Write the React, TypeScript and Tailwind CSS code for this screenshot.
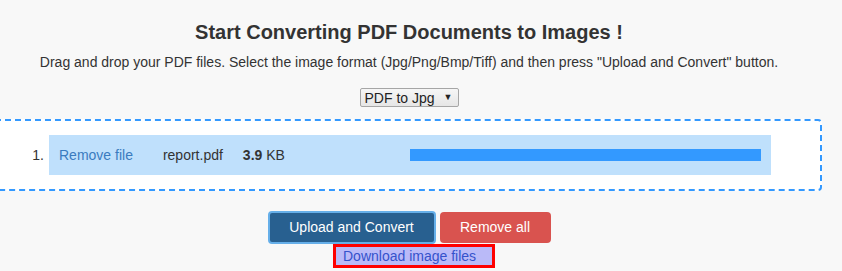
import React from "react";

export default function App() {
  return (
    <div className="min-h-[271px] w-[842px] overflow-hidden bg-[#f8f8f8] text-[#333] font-['Liberation_Sans',Arial,sans-serif]">
      <div className="w-[818px]">
        <h1 className="pt-[20px] text-center text-[20px] font-bold leading-[24px] text-[#333]">
          Start Converting PDF Documents to Images !
        </h1>
        <p className="mt-[8px] text-center text-[14px] leading-[20px]">
          Drag and drop your PDF files. Select the image format (Jpg/Png/Bmp/Tiff) and then press "Upload and Convert" button.
        </p>
        <div className="mt-[16px] flex justify-center">
          <div className="flex h-[19px] w-[99px] items-center justify-between rounded-[2px] border border-[#a6a6a6] bg-gradient-to-b from-[#f6f6f6] to-[#e6e6e6] pl-[4px] pr-[5px] text-[14px] leading-none text-[#222]">
            <span>PDF to Jpg</span>
            <span className="text-[9px] text-[#222]">▼</span>
          </div>
        </div>
        <div className="ml-[-6px] mt-[12px] w-[828px] rounded-r-[4px] border-2 border-dashed border-[#3399ff] bg-white py-[14px]">
          <div className="flex items-center">
            <span className="w-[53px] pr-[5px] text-right text-[14px]">1.</span>
            <div className="flex h-[40px] w-[722px] items-center bg-[#bfe0fc] pl-[10px] pr-[10px] text-[14px]">
              <span className="text-[#3a7bbf]">Remove file</span>
              <span className="ml-[30px]">report.pdf</span>
              <span className="ml-[20px]">
                <b>3.9</b> KB
              </span>
              <div className="ml-auto h-[12px] w-[351px] bg-[#3399ff]" />
            </div>
          </div>
        </div>
        <div className="mt-[20px] flex items-center justify-center gap-[4px]">
          <div className="flex h-[33px] w-[168px] items-center justify-center rounded-[4px] border-2 border-[#66afe9] bg-[#286090] text-[14px] text-white">
            Upload and Convert
          </div>
          <div className="flex h-[31px] w-[111px] items-center justify-center rounded-[4px] bg-[#d9534f] text-[14px] text-white">
            Remove all
          </div>
        </div>
        <div className="flex justify-center pl-[10px]">
          <div className="flex h-[24px] w-[162px] items-center border-[3px] border-[#ff0000] bg-[#babaf8] pl-[7px] text-[14px] text-[#3552cc]">
            Download image files
          </div>
        </div>
      </div>
    </div>
  );
}
